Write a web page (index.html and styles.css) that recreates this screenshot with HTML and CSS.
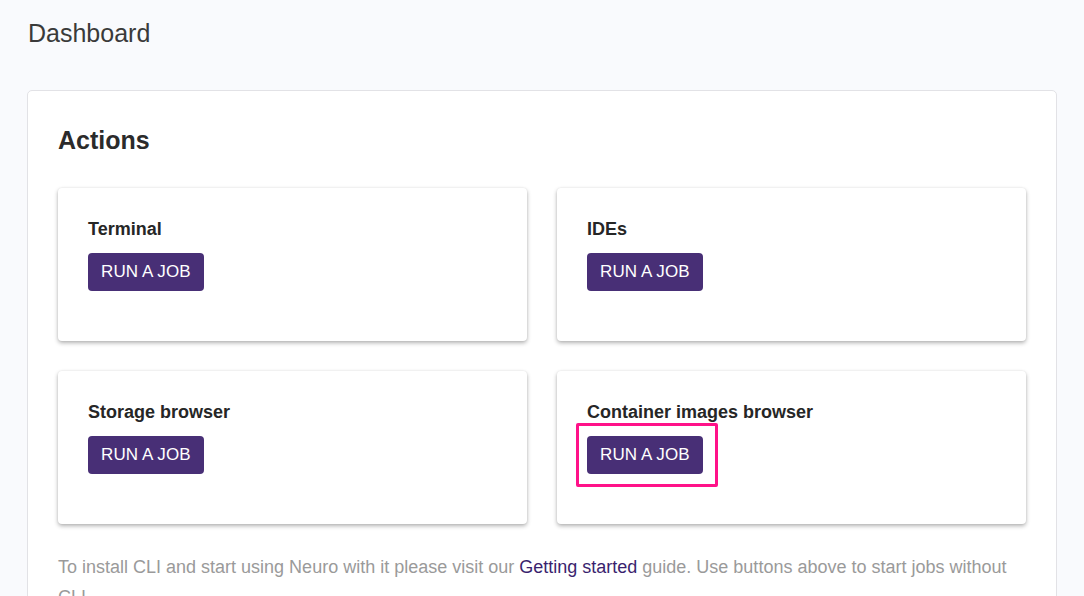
FILE: index.html
```html
<!DOCTYPE html>
<html>
<head>
<meta charset="utf-8">
<link rel="stylesheet" href="styles.css">
</head>
<body>
<div class="page">
  <h1 class="page-title">Dashboard</h1>
  <section class="panel">
    <h2 class="panel-title">Actions</h2>
    <div class="grid">
      <div class="card">
        <div class="card-title">Terminal</div>
        <button class="btn">RUN A JOB</button>
      </div>
      <div class="card">
        <div class="card-title">IDEs</div>
        <button class="btn">RUN A JOB</button>
      </div>
      <div class="card">
        <div class="card-title">Storage browser</div>
        <button class="btn">RUN A JOB</button>
      </div>
      <div class="card">
        <div class="card-title">Container images browser</div>
        <div class="btn-wrap">
          <button class="btn">RUN A JOB</button>
          <span class="highlight"></span>
        </div>
      </div>
    </div>
    <p class="note">To install CLI and start using Neuro with it please visit our <a href="#" class="link">Getting started</a> guide. Use buttons above to start jobs without CLI.</p>
  </section>
</div>
</body>
</html>
```

FILE: styles.css
```css
html, body {
  margin: 0;
  padding: 0;
  background: #f9fafd;
  font-family: "Liberation Sans", Arial, sans-serif;
}
.page {
  padding: 20px 27px 0 27px;
  width: 1030px;
}
.page-title {
  margin: 0 0 43px 1px;
  font-size: 25px;
  font-weight: normal;
  color: #3a3a3a;
  line-height: 27px;
}
.panel {
  background: #fff;
  border: 1px solid #e2e2e6;
  border-radius: 5px;
  padding: 31px 30px 0 30px;
}
.panel-title {
  margin: 0 0 30px 0;
  font-size: 25px;
  font-weight: bold;
  color: #2b2b2b;
  line-height: 36px;
}
.grid {
  display: grid;
  grid-template-columns: 469px 469px;
  column-gap: 30px;
  row-gap: 30px;
}
.card {
  background: #fff;
  border-radius: 4px;
  box-shadow: 0 2px 4px rgba(0,0,0,0.3), 0 0 2px rgba(0,0,0,0.08);
  height: 153px;
  box-sizing: border-box;
  padding: 31px 30px 0 30px;
}
.card-title {
  font-size: 18px;
  font-weight: bold;
  color: #262626;
  line-height: 20px;
  margin: 0 0 14px 0;
}
.btn-wrap {
  position: relative;
  display: inline-block;
}
.btn {
  display: inline-block;
  background: #482f76;
  color: #fff;
  border: none;
  border-radius: 4px;
  height: 38px;
  padding: 0 13px;
  font-family: "Liberation Sans", Arial, sans-serif;
  font-size: 17px;
  letter-spacing: 0.1px;
  cursor: pointer;
}
.highlight {
  position: absolute;
  left: -11px;
  top: -13px;
  right: -15px;
  bottom: -13px;
  border: 3px solid #ff1289;
  border-radius: 2px;
  pointer-events: none;
}
.note {
  margin: 28px 0 0 0;
  font-size: 18px;
  line-height: 30px;
  color: #9a9a9a;
}
.link {
  color: #3a1f6e;
  text-decoration: none;
}
```
